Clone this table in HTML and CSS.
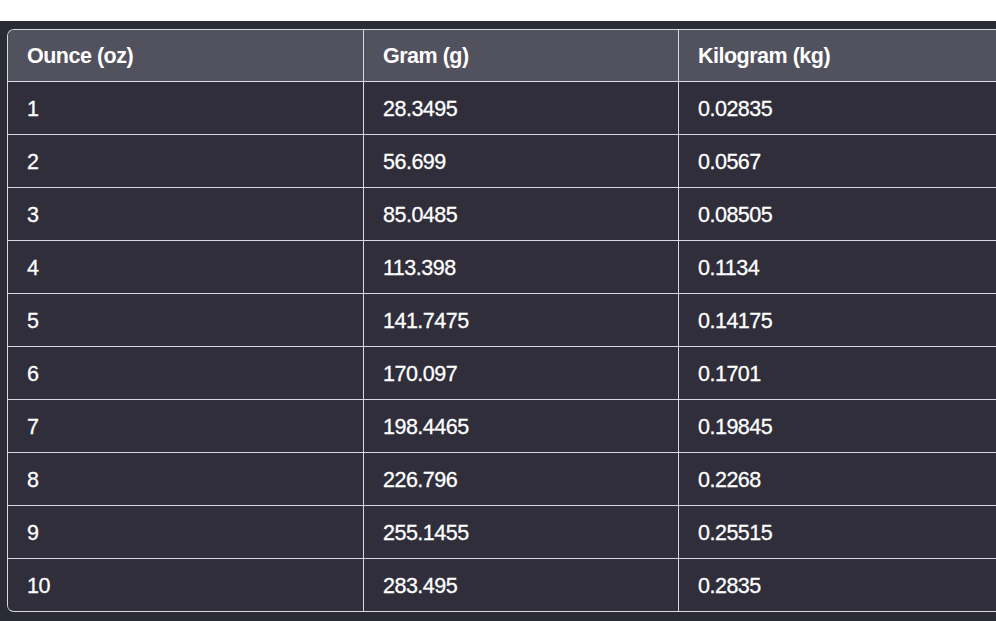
FILE: index.html
```html
<!DOCTYPE html>
<html>
<head>
<meta charset="utf-8">
<link rel="stylesheet" href="styles.css">
</head>
<body>
<div class="top"></div>
<div class="panel">
  <table class="conv">
    <thead>
      <tr><th>Ounce (oz)</th><th>Gram (g)</th><th>Kilogram (kg)</th></tr>
    </thead>
    <tbody>
      <tr><td>1</td><td>28.3495</td><td>0.02835</td></tr>
      <tr><td>2</td><td>56.699</td><td>0.0567</td></tr>
      <tr><td>3</td><td>85.0485</td><td>0.08505</td></tr>
      <tr><td>4</td><td>113.398</td><td>0.1134</td></tr>
      <tr><td>5</td><td>141.7475</td><td>0.14175</td></tr>
      <tr><td>6</td><td>170.097</td><td>0.1701</td></tr>
      <tr><td>7</td><td>198.4465</td><td>0.19845</td></tr>
      <tr><td>8</td><td>226.796</td><td>0.2268</td></tr>
      <tr><td>9</td><td>255.1455</td><td>0.25515</td></tr>
      <tr><td>10</td><td>283.495</td><td>0.2835</td></tr>
    </tbody>
  </table>
</div>
</body>
</html>
```
FILE: styles.css
```css
html, body {
  margin: 0;
  padding: 0;
  background: #ffffff;
  overflow: hidden;
}
body {
  width: 996px;
  height: 621px;
  font-family: "Liberation Sans", Arial, sans-serif;
}
.top {
  height: 21px;
  background: #ffffff;
}
.panel {
  height: 600px;
  background: #2b2b35;
  padding: 8px 0 0 7px;
  box-sizing: border-box;
  overflow: hidden;
}
.conv {
  border-collapse: separate;
  border-spacing: 0;
  width: 1006px;
  table-layout: fixed;
  border-top: 1.5px solid #d9d9e3;
  border-left: 1.5px solid #d9d9e3;
  border-radius: 7px 0 0 7px;
  color: #ffffff;
  font-size: 21.5px;
  letter-spacing: -0.5px;
}
.conv th:nth-child(1), .conv td:nth-child(1) { width: 336px; }
.conv th:nth-child(2), .conv td:nth-child(2) { width: 295px; }
.conv th, .conv td {
  text-align: left;
  padding: 0 0 0 19px;
  border-right: 1.5px solid #d9d9e3;
  border-bottom: 1.5px solid #d9d9e3;
}
.conv th {
  background: #52525e;
  font-weight: bold;
  height: 48.5px;
  padding-top: 2px;
}
.conv th:first-child { border-top-left-radius: 6px; }
.conv td {
  background: #2f2e3a;
  height: 49.1px;
  padding-top: 3px;
  -webkit-text-stroke: 0.3px #ffffff;
}
.conv tbody tr:last-child td:first-child { border-bottom-left-radius: 6px; }
```
